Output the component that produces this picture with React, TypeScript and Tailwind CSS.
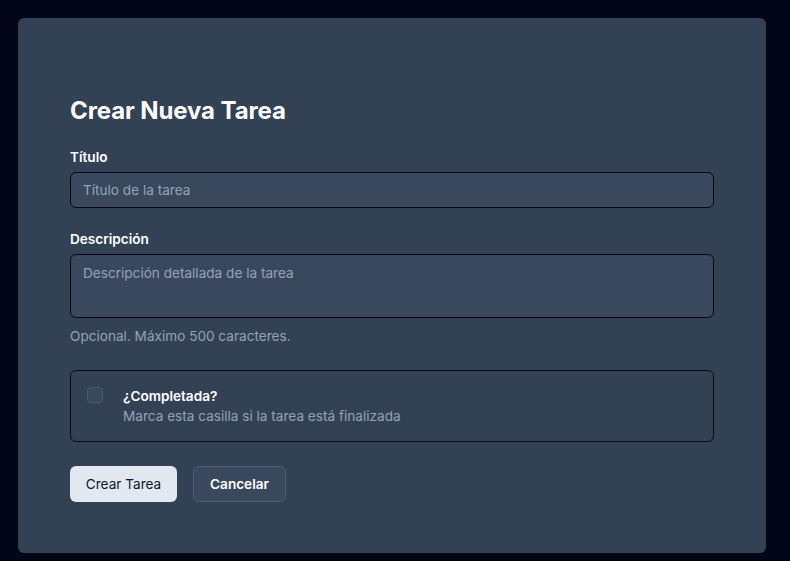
import React from "react";

export default function App() {
  return (
    <div className="min-h-[561px] w-full bg-[#020617] p-[18px] pr-[24px]" style={{ fontFamily: "Inter, 'Liberation Sans', sans-serif" }}>
      <div className="h-[535px] rounded-md bg-[#334155] px-[52px] pt-[77px]">
        <h1 className="text-[24px] font-bold leading-8 text-white tracking-[-0.1px]">Crear Nueva Tarea</h1>
        <div className="mt-[20px] flex flex-col">
          <label className="text-[13.6px] font-semibold leading-5 text-white">Título</label>
          <input
            placeholder="Título de la tarea"
            className="mt-[5px] h-[36px] w-full rounded-md border border-[#020617] bg-[#3a485d] px-3 text-[13.6px] text-white placeholder:text-[#94a3b8] outline-none"
          />
        </div>
        <div className="mt-[21px] flex flex-col">
          <label className="text-[13.6px] font-semibold leading-5 text-white">Descripción</label>
          <textarea
            placeholder="Descripción detallada de la tarea"
            className="mt-[5px] h-[64px] w-full resize-none rounded-md border border-[#020617] bg-[#3a485d] px-3 py-[8px] text-[13.6px] text-white placeholder:text-[#94a3b8] outline-none"
          />
          <p className="mt-[8px] text-[13.6px] leading-5 text-[#94a3b8]">Opcional. Máximo 500 caracteres.</p>
        </div>
        <div className="mt-[24px] flex h-[72px] items-start gap-[20px] rounded-md border border-[#020617] px-[16px] pt-[15px]">
          <div className="mt-[1px] h-[16px] w-[16px] rounded-[4px] border border-[#4b5a70] bg-[#3a485d]" />
          <div className="flex flex-col">
            <span className="text-[13.6px] font-semibold leading-5 text-white">¿Completada?</span>
            <span className="text-[13.6px] leading-5 text-[#94a3b8]">Marca esta casilla si la tarea está finalizada</span>
          </div>
        </div>
        <div className="mt-[24px] flex gap-[16px]">
          <button className="h-[36px] w-[107px] rounded-md bg-[#e2e8f0] text-[13.6px] font-normal text-[#0f172a]">Crear Tarea</button>
          <button className="h-[36px] w-[93px] rounded-md border border-[#4f5e74] bg-[#3a485d] text-[13.6px] font-semibold text-white">Cancelar</button>
        </div>
      </div>
    </div>
  );
}
